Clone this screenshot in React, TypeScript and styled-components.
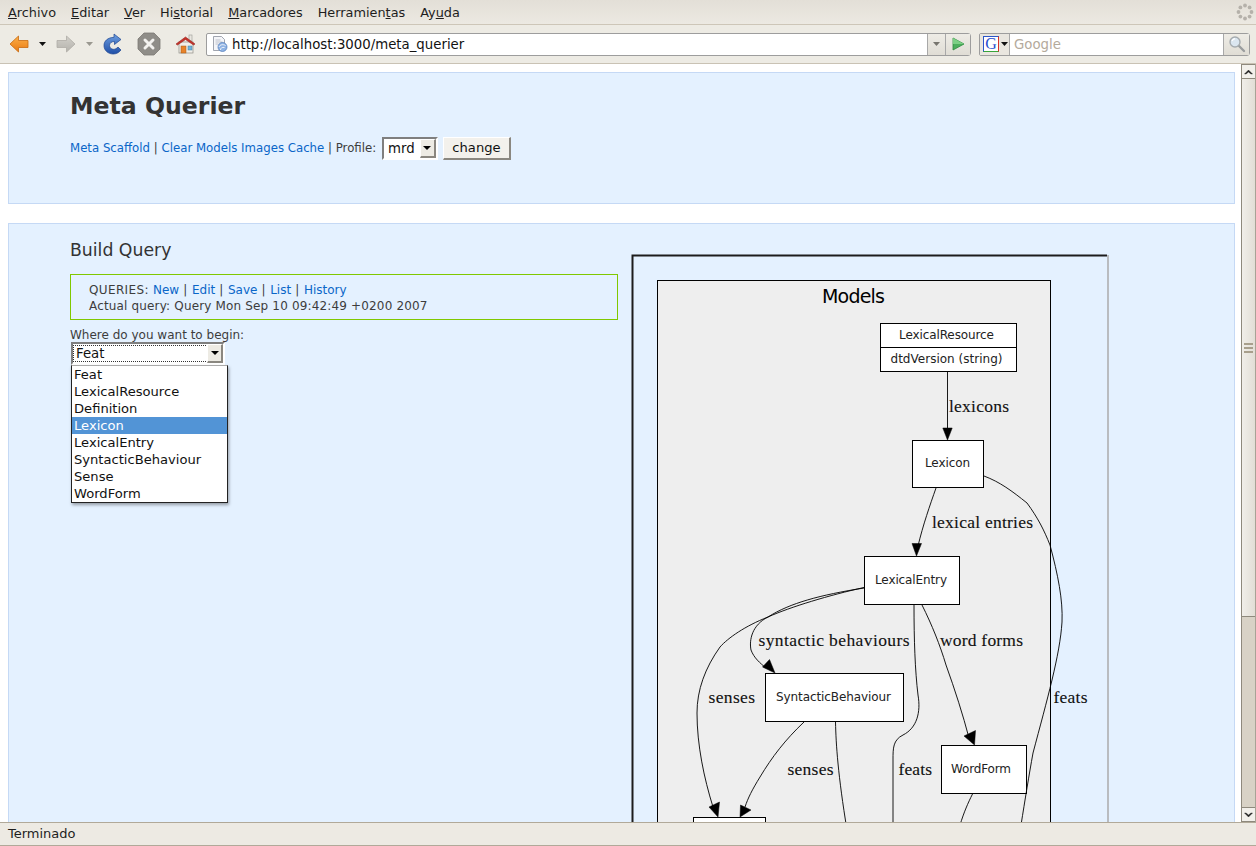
import React from "react";
import styled, { createGlobalStyle } from "styled-components";

const GlobalStyle = createGlobalStyle`
  html, body {
    margin: 0;
    padding: 0;
    height: 100%;
    overflow: hidden;
    background: #fff;
  }
  body {
    font-family: "DejaVu Sans", sans-serif;
  }
`;

const Window = styled.div`
  width: 1256px;
  height: 846px;
  display: flex;
  flex-direction: column;
  overflow: hidden;
  color: #333;
`;

/* browser chrome */

const MenuBar = styled.div`
  height: 24px;
  flex: none;
  display: flex;
  align-items: center;
  justify-content: space-between;
  padding: 0 2px 0 8px;
  background: linear-gradient(#e3dfd7, #ece9e2);
  border-bottom: 1px solid #cdc6b8;
`;

const MenuList = styled.div`
  display: flex;
  gap: 15px;
  font-size: 12.85px;
  color: #1e1e1e;
`;

const Mnemonic = styled.span`
  text-decoration: underline;
`;

const Toolbar = styled.div`
  height: 38px;
  flex: none;
  display: flex;
  align-items: center;
  padding: 0 6px 0 8px;
  background: #edebe4;
  border-bottom: 1px solid #c9c2b4;
`;

const ToolSlot = styled.div<{ $w: number }>`
  width: ${(p) => p.$w}px;
  flex: none;
  display: flex;
  align-items: center;
  justify-content: center;
`;

const UrlBar = styled.div`
  flex: 1;
  height: 21px;
  margin-left: 8px;
  display: flex;
  align-items: stretch;
  background: #fff;
  border: 1px solid #9d9d9d;
  border-radius: 2px 3px 3px 2px;
`;

const UrlIcon = styled.div`
  width: 25px;
  flex: none;
  display: flex;
  align-items: center;
  justify-content: center;
`;

const UrlText = styled.div`
  flex: 1;
  font-size: 13.3px;
  line-height: 21px;
  color: #111;
`;

const BarButton = styled.div<{ $w: number }>`
  width: ${(p) => p.$w}px;
  flex: none;
  display: flex;
  align-items: center;
  justify-content: center;
  background: linear-gradient(#eeece6, #e0ddd5);
  border-left: 1px solid #a8a8a8;
`;

const SearchBar = styled.div`
  width: 271px;
  height: 23px;
  box-sizing: border-box;
  flex: none;
  margin-left: 8px;
  display: flex;
  align-items: stretch;
  background: #fff;
  border: 1px solid #9d9d9d;
  border-radius: 2px 3px 3px 2px;
`;

const EngineButton = styled.div`
  width: 30px;
  flex: none;
  display: flex;
  align-items: center;
  padding-left: 3px;
  gap: 2px;
  box-sizing: border-box;
  background: #e9e6df;
  border-right: 1px solid #a8a8a8;
`;

const EngineLogo = styled.span`
  width: 14px;
  height: 14px;
  flex: none;
  display: block;
  border-top: 1px solid #2d56c8;
  border-left: 1px solid #2d56c8;
  border-right: 1px solid #d8322a;
  border-bottom: 1px solid #3aa53a;
  background: #fff;
  font-family: "Liberation Serif", serif;
  font-size: 16px;
  line-height: 14px;
  text-align: center;
  color: #2a4fd0;
`;

const SearchHint = styled.div`
  flex: 1;
  padding-left: 4px;
  font-size: 13.3px;
  line-height: 21px;
  color: #b4aa9c;
`;

/* page area */

const Viewport = styled.div`
  flex: 1;
  min-height: 0;
  display: flex;
`;

const Page = styled.div`
  flex: 1;
  min-width: 0;
  overflow: hidden;
  padding: 8px 6px 0 8px;
  font-size: 12px;
`;

const Panel = styled.div`
  background: #e4f1ff;
  border: 1px solid #c5d9f5;
  padding-left: 61px;
`;

const HeaderPanel = styled(Panel)`
  height: 132px;
  box-sizing: border-box;
  padding-top: 18px;
`;

const QueryPanel = styled(Panel)`
  margin-top: 19px;
  display: flex;
  align-items: flex-start;
  gap: 13px;
  height: 700px;
  box-sizing: border-box;
  border-bottom: 0;
`;

const Title = styled.h1`
  margin: 0;
  font-size: 23.6px;
  line-height: 30px;
  font-weight: bold;
  color: #333;
`;

const LinkRow = styled.div`
  margin-top: 15px;
  display: flex;
  align-items: center;
  height: 24px;
  white-space: pre;
  font-size: 11.75px;
  color: #3d3d3d;
`;

const Link = styled.a`
  color: #0a66c8;
  text-decoration: none;
`;

const InsetSelect = styled.div<{ $w: number }>`
  width: ${(p) => p.$w}px;
  height: 23px;
  box-sizing: border-box;
  position: relative;
  display: flex;
  align-items: center;
  background: #fff;
  border-style: solid;
  border-width: 2px;
  border-color: #7f7f7f #fff #fff #7f7f7f;
  font-size: 13.3px;
  color: #111;
  padding-left: 4px;
`;

const ProfileSelect = styled(InsetSelect)`
  margin-left: 2px;
`;

const SelectArrow = styled.span`
  position: absolute;
  right: 0;
  top: 0;
  bottom: 0;
  width: 16px;
  display: flex;
  align-items: center;
  justify-content: center;
  box-sizing: border-box;
  background: #edebe4;
  border-style: solid;
  border-width: 1px 2px 2px 1px;
  border-color: #fff #8a8780 #8a8780 #fff;
`;

const Caret = styled.span`
  width: 0;
  height: 0;
  border-left: 4px solid transparent;
  border-right: 4px solid transparent;
  border-top: 4px solid #000;
`;

const PlainButton = styled.button`
  margin-left: 5px;
  width: 68px;
  height: 23px;
  padding: 0;
  background: #f3f1ec;
  border-style: solid;
  border-width: 1px 2px 2px 1px;
  border-color: #fff #8a8780 #8a8780 #fff;
  font-family: inherit;
  font-size: 13.1px;
  color: #111;
`;

const LeftColumn = styled.div`
  width: 548px;
  flex: none;
  position: relative;
  padding-top: 14px;
`;

const SectionTitle = styled.h2`
  margin: 0;
  font-size: 17.3px;
  line-height: 24px;
  font-weight: normal;
  color: #333;
`;

const QueryBox = styled.div`
  margin-top: 12px;
  height: 46px;
  box-sizing: border-box;
  padding: 7px 0 0 18px;
  border: 1px solid #80c800;
  line-height: 16px;
  color: #3d3d3d;
  white-space: pre;
  letter-spacing: 0.16px;
`;

const QueryLinks = styled.div`
  letter-spacing: 0.36px;

  ${Link} {
    letter-spacing: 0;
  }
`;

const FieldLabel = styled.div`
  margin-top: 8px;
  line-height: 15px;
  color: #3d3d3d;
`;

const BeginSelect = styled(InsetSelect)`
  margin: -1px 0 0 1px;
  padding-left: 0;
`;

const FocusText = styled.span`
  flex: 1;
  height: 15px;
  line-height: 15px;
  margin-right: 15px;
  padding-left: 2px;
  border: 1px dotted #333;
`;

const DropList = styled.ul`
  position: absolute;
  left: 1px;
  top: 141px;
  width: 157px;
  box-sizing: border-box;
  margin: 0;
  padding: 0;
  list-style: none;
  background: #fff;
  border: 1px solid #222;
  border-top-color: #aaa;
  box-shadow: 1px 2px 3px rgba(0, 0, 0, 0.35);
`;

const DropItem = styled.li<{ $active?: boolean }>`
  height: 17px;
  line-height: 17px;
  padding-left: 2px;
  font-size: 13.1px;
  color: ${(p) => (p.$active ? "#fff" : "#111")};
  background: ${(p) => (p.$active ? "#5294d6" : "transparent")};
`;

const GraphImage = styled.svg`
  flex: none;
  display: block;
  margin-top: 30px;
`;

/* scrollbar + status */

const ScrollBar = styled.div`
  width: 15px;
  flex: none;
  display: flex;
  flex-direction: column;
  box-sizing: border-box;
  background: #d8d2c6;
  border-left: 1px solid #8e897d;
  border-right: 1px solid #a8a396;
`;

const ScrollButton = styled.div`
  height: 15px;
  flex: none;
  display: flex;
  align-items: center;
  justify-content: center;
  background: #f2f0eb;
  border-bottom: 1px solid #8e897d;
  border-top: 1px solid #8e897d;
  box-sizing: border-box;
`;

const ScrollThumb = styled.div`
  height: 538px;
  flex: none;
  display: flex;
  flex-direction: column;
  align-items: center;
  justify-content: center;
  gap: 2px;
  box-sizing: border-box;
  background: linear-gradient(90deg, #f0eee9, #e2ded6);
  border-bottom: 1px solid #8e897d;
`;

const Grip = styled.span`
  width: 9px;
  height: 2px;
  background: #a89f8c;
`;

const ScrollGap = styled.div`
  flex: 1;
`;

const StatusBar = styled.div`
  height: 24px;
  flex: none;
  box-sizing: border-box;
  padding-left: 8px;
  background: #edeae3;
  border-top: 1px solid #b1a999;
  border-bottom: 1px solid #b1a999;
  font-size: 13px;
  line-height: 21px;
  color: #1e1e1e;
`;

/* drawings */

const Dropdown = ({ color }: { color: string }) => (
  <svg width="7" height="4" viewBox="0 0 7 4">
    <path d="M0 0h7L3.5 4z" fill={color} />
  </svg>
);

const ArrowIcon = ({ flip, id, from, to, edge }: { flip?: boolean; id: string; from: string; to: string; edge: string }) => (
  <svg width="20" height="18" viewBox="0 0 20 18" style={flip ? { transform: "scaleX(-1)" } : undefined}>
    <defs>
      <linearGradient id={id} x1="0" y1="0" x2="0" y2="1">
        <stop offset="0" stopColor={from} />
        <stop offset="1" stopColor={to} />
      </linearGradient>
    </defs>
    <path d="M1 9 9.5 1v4.5H19v7H9.5V17z" fill={`url(#${id})`} stroke={edge} strokeWidth="0.8" strokeLinejoin="round" />
  </svg>
);

const ReloadIcon = () => (
  <svg width="20" height="22" viewBox="0 0 20 22">
    <defs>
      <linearGradient id="rl" x1="0" y1="0" x2="0" y2="1">
        <stop offset="0" stopColor="#6f9fe0" />
        <stop offset="1" stopColor="#1f4fa8" />
      </linearGradient>
    </defs>
    <path
      d="M11 1l7 5.5-6.5 5V8.500c-3 0-5 1.500-5 4 0 2.200 1.800 3.800 4 3.800 1.800 0 3.200-.8 4.500-2.300l3 3c-2 2.500-4.600 4-7.800 4C5 21 1 17.400 1 12.500 1 8 4.600 4.600 11 4.300z"
      fill="url(#rl)"
      stroke="#1c4590"
      strokeWidth="0.7"
    />
  </svg>
);

const StopIcon = () => (
  <svg width="24" height="24" viewBox="0 0 24 24">
    <path d="M7 1h10l6 6v10l-6 6H7l-6-6V7z" fill="#8f8d88" stroke="#7b7974" strokeWidth="0.8" />
    <path d="M8 8l8 8M16 8l-8 8" stroke="#f2f1ee" strokeWidth="3" strokeLinecap="round" />
  </svg>
);

const HomeIcon = () => (
  <svg width="21" height="20" viewBox="0 0 21 20">
    <rect x="14" y="1" width="3" height="6" fill="#e8e6e0" stroke="#9a9a94" strokeWidth="0.6" />
    <rect x="4" y="8" width="14" height="11" fill="#f1efe9" stroke="#8f8d86" strokeWidth="0.7" />
    <path d="M1 10 10.500 3 20 10l-1.500 1-8-5.500-8 5.500z" fill="#c7322a" stroke="#96241e" strokeWidth="0.6" />
    <rect x="6" y="12" width="5" height="7" fill="#e8832a" stroke="#a55a14" strokeWidth="0.5" />
    <rect x="13" y="12" width="4" height="4" fill="#6fb4dc" stroke="#4a7f9f" strokeWidth="0.5" />
  </svg>
);

const PageIcon = () => (
  <svg width="16" height="16" viewBox="0 0 16 16">
    <path d="M1.500.5h8l3 3v11h-11z" fill="#f4f5f8" stroke="#8a8f9c" strokeWidth="0.8" />
    <path d="M3.500 4h5M3.500 6h7M3.500 8h3" stroke="#b0b4c0" strokeWidth="0.8" />
    <circle cx="10.500" cy="11" r="4.500" fill="#8fb3e4" stroke="#4d78b8" strokeWidth="0.7" />
    <path d="M7 11c1-2.500 4-3 6.500-1.500M8.500 14c0-2 1.500-3 4-2.500" stroke="#f0f4fb" strokeWidth="1" fill="none" />
  </svg>
);

const GoIcon = () => (
  <svg width="14" height="14" viewBox="0 0 14 14">
    <path d="M2 1l11 6-11 6z" fill="#4cae5c" stroke="#2c8a3e" strokeWidth="0.8" strokeLinejoin="round" />
    <path d="M2 1l11 6-11 0z" fill="#7ccf84" />
  </svg>
);

const MagnifierIcon = () => (
  <svg width="18" height="18" viewBox="0 0 18 18">
    <path d="M10.500 10.500l5.500 5.500" stroke="#9a9d9e" strokeWidth="2.400" strokeLinecap="round" />
    <circle cx="7" cy="7" r="5" fill="#dbe6f0" stroke="#a5abaf" strokeWidth="1.400" />
    <path d="M4 6c.5-1.500 1.500-2.200 3-2.400" stroke="#fff" strokeWidth="1.200" fill="none" />
  </svg>
);

const Throbber = () => (
  <svg width="18" height="18" viewBox="0 0 18 18">
    {[0, 45, 90, 135, 180, 225, 270, 315].map((a) => (
      <circle
        key={a}
        cx={9 + 6.500 * Math.cos((a * Math.PI) / 180)}
        cy={9 + 6.500 * Math.sin((a * Math.PI) / 180)}
        r="1.900"
        fill="#b5b1aa"
      />
    ))}
  </svg>
);

const Chevron = ({ up }: { up?: boolean }) => (
  <svg width="9" height="6" viewBox="0 0 9 6">
    <path d={up ? "M.5 5 4.500 1l4 4-1.500 0L4.500 3 2 5z" : "M.5 1l4 4 4-4-1.500 0L4.500 3 2 1z"} fill="#222" stroke="#222" strokeWidth="0.4" />
  </svg>
);

type Node = { x: number; y: number; w: number; h: number; label: string; tx: number; tw: number; ty: number };

const nodes: Node[] = [
  { x: 912.5, y: 440.5, w: 71, h: 47, label: "Lexicon", tx: 925, tw: 45, ty: 467 },
  { x: 864.5, y: 556.5, w: 95, h: 48, label: "LexicalEntry", tx: 875, tw: 72, ty: 584 },
  { x: 765.5, y: 673.5, w: 138, h: 48, label: "SyntacticBehaviour", tx: 776, tw: 115, ty: 701 },
  { x: 941.5, y: 745.5, w: 85, h: 48, label: "WordForm", tx: 951, tw: 60, ty: 773 },
  { x: 693.5, y: 817.5, w: 72, h: 48, label: "", tx: 0, tw: 0, ty: 0 }
];

const edges = [
  "M947.500 372V430",
  "M936 488C930 505 923 525 918 546",
  "M984 476C1000 482 1012 491 1027 503C1038 518 1044 530 1050 545C1058 575 1063 600 1062 622C1060 655 1047 700 1033 753C1029 775 1025 800 1021 825",
  "M864 588C820 595 790 603 768 617C752 625 749 640 751 650C754 658 760 663 766 668",
  "M864 587.500C830 595 790 607 768 617C745 626 728 638 720 647C705 668 697 690 697 713C697 745 704 778 713 807",
  "M914 605C914 640 915 670 918 695C921 712 917 728 903 735C893 740 893 748 893 760V830",
  "M922 605C932 625 940 645 946 665C955 690 963 715 969 738",
  "M804 722C785 740 772 757 760 777C752 790 748 798 745 807",
  "M835.500 722C836 745 838 775 847 830",
  "M972.500 794C968 803 964 812 960 825"
];

const arrows = [
  "M947.500 440 942.800 428H952.200z",
  "M916.500 556 912 543.500H921.500z",
  "M775 673 762.500 667 769.500 659.500z",
  "M974.500 745 964 736 975.500 730.500z",
  "M718 817 709 807 719.500 802z",
  "M740 817 740.500 805 751 810z"
];

const labels: [string, number, number, number][] = [
  ["lexicons", 949, 412, 60],
  ["lexical entries", 932, 528, 101],
  ["syntactic behaviours", 758.5, 646, 151],
  ["word forms", 940, 646, 83],
  ["senses", 708.5, 703, 46.5],
  ["feats", 1053.500, 703, 34],
  ["senses", 787.500, 775, 46],
  ["feats", 898.500, 775, 33.500]
];

const ModelGraph = () => (
  <GraphImage width="478" height="600" viewBox="631 254 478 600" aria-label="Models diagram">
    <path d="M632.500 860V255.500H1107" fill="none" stroke="#1c1c1c" strokeWidth="2" />
    <path d="M1108 255V860" stroke="#b9bcc0" strokeWidth="2" />
    <rect x="657.500" y="280.500" width="393" height="600" fill="#eeeeee" stroke="#000" />
    <text x="822" y="303" fontFamily="DejaVu Sans" fontSize="19" textLength="63" fill="#000">
      Models
    </text>

    <rect x="880.500" y="323.500" width="136" height="48" fill="#fff" stroke="#000" />
    <path d="M880.500 347.500H1016.500" stroke="#000" />
    <text x="899" y="339" fontFamily="DejaVu Sans" fontSize="12" textLength="95" fill="#222">
      LexicalResource
    </text>
    <text x="890.500" y="363" fontFamily="DejaVu Sans" fontSize="12" textLength="112" fill="#222">
      dtdVersion (string)
    </text>

    {nodes.map((n) => (
      <g key={n.x}>
        <rect x={n.x} y={n.y} width={n.w} height={n.h} fill="#fff" stroke="#000" />
        {n.label && (
          <text x={n.tx} y={n.ty} fontFamily="DejaVu Sans" fontSize="12" textLength={n.tw} fill="#222">
            {n.label}
          </text>
        )}
      </g>
    ))}

    {edges.map((d) => (
      <path key={d} d={d} fill="none" stroke="#000" strokeWidth="0.9" />
    ))}
    {arrows.map((d) => (
      <path key={d} d={d} fill="#000" stroke="#000" strokeWidth="0.5" />
    ))}
    {labels.map(([text, x, y, w]) => (
      <text key={text + x} x={x} y={y} fontFamily="Liberation Serif" fontSize="17.5" textLength={w} fill="#111" stroke="#111" strokeWidth="0.12">
        {text}
      </text>
    ))}
  </GraphImage>
);

const beginOptions = ["Feat", "LexicalResource", "Definition", "Lexicon", "LexicalEntry", "SyntacticBehaviour", "Sense", "WordForm"];

export default function App() {
  return (
    <Window>
      <GlobalStyle />
      <MenuBar>
        <MenuList>
          <span><Mnemonic>A</Mnemonic>rchivo</span>
          <span><Mnemonic>E</Mnemonic>ditar</span>
          <span><Mnemonic>V</Mnemonic>er</span>
          <span>Hi<Mnemonic>s</Mnemonic>torial</span>
          <span><Mnemonic>M</Mnemonic>arcadores</span>
          <span>Herramien<Mnemonic>t</Mnemonic>as</span>
          <span>Ay<Mnemonic>u</Mnemonic>da</span>
        </MenuList>
        <Throbber />
      </MenuBar>

      <Toolbar>
        <ToolSlot $w={22}><ArrowIcon id="bk" from="#fbb04a" to="#ea7a12" edge="#c8690f" /></ToolSlot>
        <ToolSlot $w={24}><Dropdown color="#111" /></ToolSlot>
        <ToolSlot $w={24}><ArrowIcon flip id="fw" from="#d2d0ca" to="#b4b2ac" edge="#aeaca6" /></ToolSlot>
        <ToolSlot $w={22}><Dropdown color="#9a9890" /></ToolSlot>
        <ToolSlot $w={26}><ReloadIcon /></ToolSlot>
        <ToolSlot $w={46}><StopIcon /></ToolSlot>
        <ToolSlot $w={26}><HomeIcon /></ToolSlot>
        <UrlBar>
          <UrlIcon><PageIcon /></UrlIcon>
          <UrlText>http://localhost:3000/meta_querier</UrlText>
          <BarButton $w={17}><Dropdown color="#77756e" /></BarButton>
          <BarButton $w={24}><GoIcon /></BarButton>
        </UrlBar>
        <SearchBar>
          <EngineButton>
            <EngineLogo>G</EngineLogo>
            <Dropdown color="#111" />
          </EngineButton>
          <SearchHint>Google</SearchHint>
          <BarButton $w={25}><MagnifierIcon /></BarButton>
        </SearchBar>
      </Toolbar>

      <Viewport>
        <Page>
          <HeaderPanel>
            <Title>Meta Querier</Title>
            <LinkRow>
              <Link href="#">Meta Scaffold</Link>
              {" | "}
              <Link href="#">Clear Models Images Cache</Link>
              {" | Profile: "}
              <ProfileSelect $w={56}>
                mrd
                <SelectArrow><Caret /></SelectArrow>
              </ProfileSelect>
              <PlainButton>change</PlainButton>
            </LinkRow>
          </HeaderPanel>

          <QueryPanel>
            <LeftColumn>
              <SectionTitle>Build Query</SectionTitle>
              <QueryBox>
                <QueryLinks>
                  QUERIES: <Link href="#">New</Link> | <Link href="#">Edit</Link> | <Link href="#">Save</Link> | <Link href="#">List</Link> | <Link href="#">History</Link>
                </QueryLinks>
                <div>Actual query: Query Mon Sep 10 09:42:49 +0200 2007</div>
              </QueryBox>
              <FieldLabel>Where do you want to begin:</FieldLabel>
              <BeginSelect $w={154}>
                <FocusText>Feat</FocusText>
                <SelectArrow><Caret /></SelectArrow>
              </BeginSelect>
              <DropList>
                {beginOptions.map((o) => (
                  <DropItem key={o} $active={o === "Lexicon"}>{o}</DropItem>
                ))}
              </DropList>
            </LeftColumn>
            <ModelGraph />
          </QueryPanel>
        </Page>

        <ScrollBar>
          <ScrollButton><Chevron up /></ScrollButton>
          <ScrollThumb><Grip /><Grip /><Grip /></ScrollThumb>
          <ScrollGap />
          <ScrollButton><Chevron /></ScrollButton>
        </ScrollBar>
      </Viewport>

      <StatusBar>Terminado</StatusBar>
    </Window>
  );
}
